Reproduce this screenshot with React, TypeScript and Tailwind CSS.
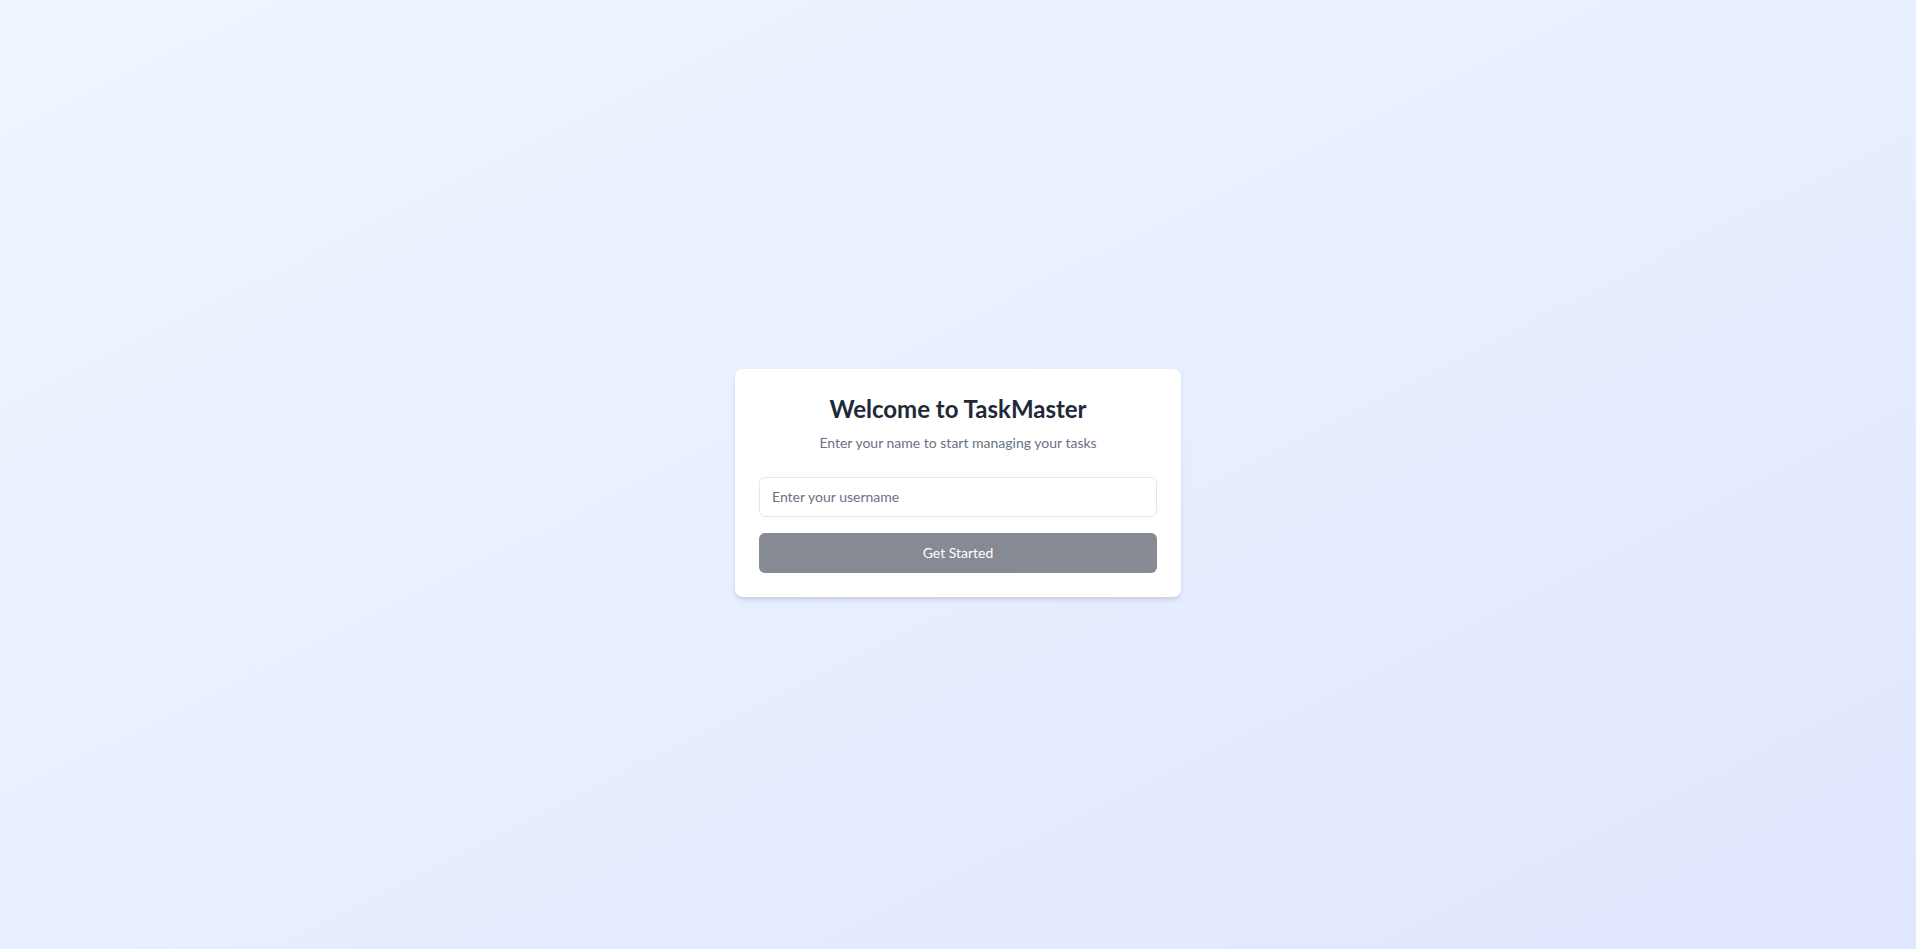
import { useState } from "react";

const App = () => {
  const [username, setUsername] = useState("");

  return (
    <div
      className="min-h-screen bg-gradient-to-br from-blue-50 to-indigo-100 flex items-center justify-center px-4 pt-4"
      style={{ fontFamily: 'Lato, "Noto Sans", sans-serif' }}
    >
      <div className="w-full max-w-[446px] bg-white rounded-lg shadow-md p-6">
        <div className="text-center mb-6">
          <h1 className="text-2xl leading-8 font-bold text-gray-800">Welcome to TaskMaster</h1>
          <p className="text-sm text-gray-500 mt-2">Enter your name to start managing your tasks</p>
        </div>

        <form className="flex flex-col gap-4" onSubmit={(e) => e.preventDefault()}>
          <input
            type="text"
            value={username}
            onChange={(e) => setUsername(e.target.value)}
            placeholder="Enter your username"
            className="w-full h-10 px-3 text-sm border border-gray-200 rounded-md text-gray-800 placeholder:text-gray-500 outline-none focus:ring-2 focus:ring-blue-500"
          />
          <button
            type="submit"
            disabled={!username.trim()}
            className="w-full h-10 rounded-md bg-gray-900 text-white text-sm disabled:opacity-50"
          >
            Get Started
          </button>
        </form>
      </div>
    </div>
  );
};

export default App;
